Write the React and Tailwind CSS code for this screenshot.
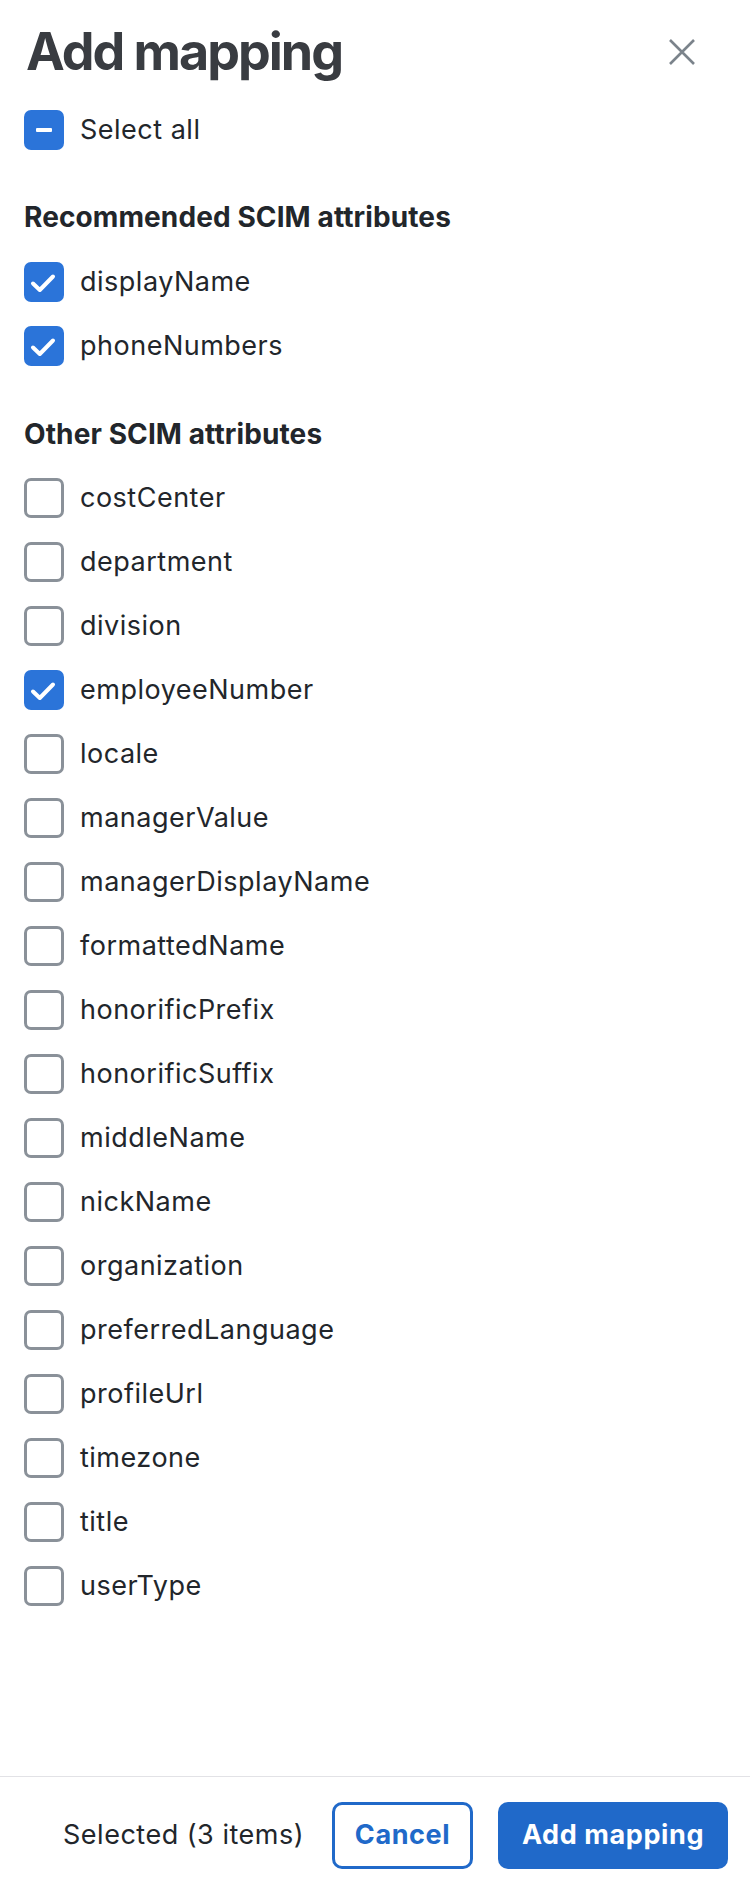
import { useState } from "react";

const RECOMMENDED = ["displayName", "phoneNumbers"];
const OTHER = [
  "costCenter",
  "department",
  "division",
  "employeeNumber",
  "locale",
  "managerValue",
  "managerDisplayName",
  "formattedName",
  "honorificPrefix",
  "honorificSuffix",
  "middleName",
  "nickName",
  "organization",
  "preferredLanguage",
  "profileUrl",
  "timezone",
  "title",
  "userType",
];

function Box({ state }) {
  // state: "on" | "off" | "mixed"
  if (state === "off") {
    return (
      <span className="w-10 h-10 shrink-0 rounded-[7px] border-[3px] border-[#8a9199] bg-white" />
    );
  }
  return (
    <span className="w-10 h-10 shrink-0 rounded-[7px] bg-[#2b74d9] flex items-center justify-center">
      {state === "mixed" ? (
        <span className="w-4 h-1 bg-white rounded-[1px]" />
      ) : (
        <svg width="40" height="40" viewBox="0 0 40 40" fill="none">
          <path
            d="M9 21.5 L15.8 28 L29 14.5"
            stroke="white"
            strokeWidth="4"
            strokeLinecap="round"
            strokeLinejoin="round"
          />
        </svg>
      )}
    </span>
  );
}

function Row({ label, state, onClick }) {
  return (
    <div
      onClick={onClick}
      className="h-16 flex items-center gap-4 cursor-pointer select-none"
    >
      <Box state={state} />
      <span className="text-[27px] leading-8 tracking-[0.5px] text-[#22262b]">{label}</span>
    </div>
  );
}

export default function App() {
  const [checked, setChecked] = useState({
    displayName: true,
    phoneNumbers: true,
    employeeNumber: true,
  });

  const all = [...RECOMMENDED, ...OTHER];
  const count = all.filter((k) => checked[k]).length;
  const allState = count === 0 ? "off" : count === all.length ? "on" : "mixed";

  const toggle = (k) => setChecked((c) => ({ ...c, [k]: !c[k] }));

  const toggleAll = () => {
    if (count === all.length) setChecked({});
    else setChecked(Object.fromEntries(all.map((k) => [k, true])));
  };

  return (
    <div className="min-h-screen flex flex-col bg-white font-['Inter',sans-serif]">

      {/* BODY */}
      <div className="flex-1 px-6">
        <div className="flex justify-between items-start pt-[21px]">
          <h1 className="text-[52px] leading-[62px] font-bold text-[#393c41] tracking-[-2px] pl-[2px]">
            Add mapping
          </h1>
          <button className="mt-[18px] mr-[31px] text-[#7b838b]">
            <svg width="26" height="26" viewBox="0 0 26 26" fill="none">
              <path d="M1 1 L25 25 M25 1 L1 25" stroke="currentColor" strokeWidth="2.6" />
            </svg>
          </button>
        </div>

        <div className="mt-[15px]">
          <Row label="Select all" state={allState} onClick={toggleAll} />
        </div>

        <h2 className="mt-[39px] mb-[17px] text-[28px] leading-8 font-bold tracking-[0.1px] text-[#22262b]">
          Recommended SCIM attributes
        </h2>
        {RECOMMENDED.map((k) => (
          <Row key={k} label={k} state={checked[k] ? "on" : "off"} onClick={() => toggle(k)} />
        ))}

        <h2 className="mt-[40px] mb-[16px] text-[28px] leading-8 font-bold tracking-[0.1px] text-[#22262b]">
          Other SCIM attributes
        </h2>
        {OTHER.map((k) => (
          <Row key={k} label={k} state={checked[k] ? "on" : "off"} onClick={() => toggle(k)} />
        ))}
      </div>

      {/* FOOTER */}
      <div className="border-t border-[#e2e2e6] flex justify-end items-center pt-[25px] pb-[21px] pr-[22px]">
        <span className="text-[27px] tracking-[0.5px] text-[#22262b] mr-7">
          Selected ({count} items)
        </span>
        <button className="h-[67px] w-[141px] rounded-[10px] border-[3px] border-[#2069c9] text-[27px] tracking-[0.6px] font-bold text-[#2069c9] mr-[25px]">
          Cancel
        </button>
        <button className="h-[67px] w-[230px] rounded-[10px] bg-[#2069c9] text-[27px] tracking-[0.6px] font-bold text-white">
          Add mapping
        </button>
      </div>

    </div>
  );
}
